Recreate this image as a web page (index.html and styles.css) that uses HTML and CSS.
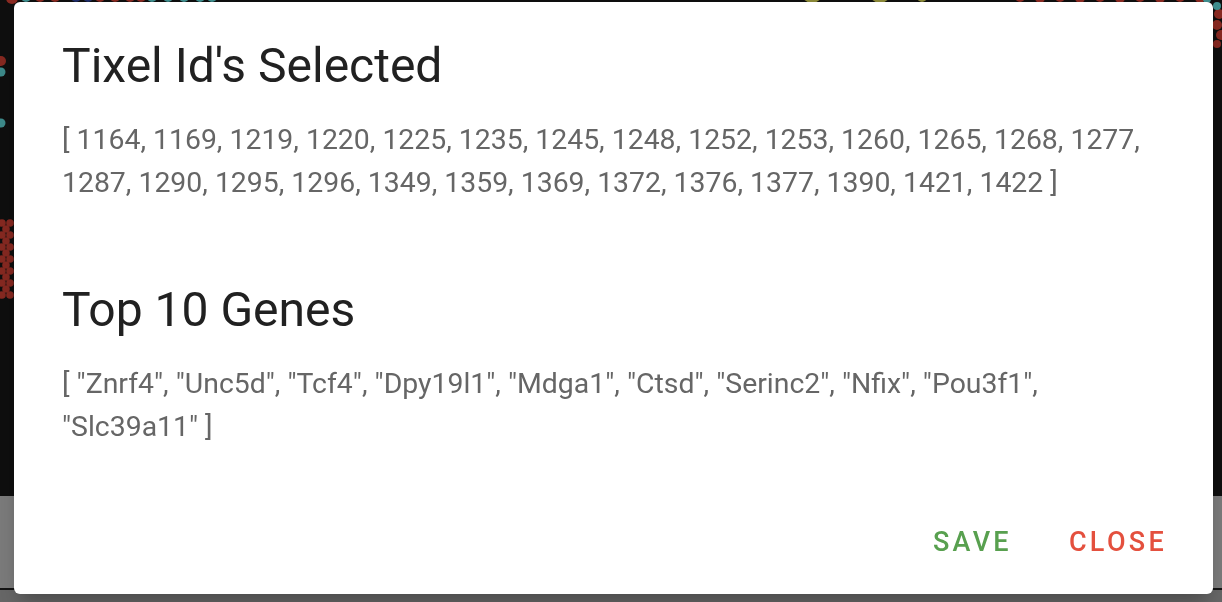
FILE: index.html
```html
<!DOCTYPE html>
<html lang="en">
<head>
<meta charset="utf-8">
<title>Tixel Id's Selected</title>
<link rel="stylesheet" href="styles.css">
</head>
<body>
<div class="page">
  <div class="plot-area">
    <svg class="dots" width="1222" height="496" viewBox="0 0 1222 496" xmlns="http://www.w3.org/2000/svg">
      <g fill="#8a2a22">
        <circle cx="12" cy="-2" r="6"/><circle cx="40" cy="-3" r="5"/><circle cx="55" cy="-3" r="5"/>
        <circle cx="100" cy="-3" r="5"/><circle cx="115" cy="-3" r="5"/><circle cx="130" cy="-3" r="5"/><circle cx="141" cy="-3" r="5"/>
        <circle cx="1020" cy="-3" r="5"/><circle cx="1040" cy="-2" r="5"/><circle cx="1060" cy="-3" r="5"/><circle cx="1080" cy="-2" r="5"/>
        <circle cx="1100" cy="-3" r="5"/><circle cx="1120" cy="-2" r="5"/><circle cx="1140" cy="-3" r="5"/><circle cx="1160" cy="-2" r="5"/>
        <circle cx="1180" cy="-3" r="5"/><circle cx="1200" cy="-2" r="5"/>
        <circle cx="1219" cy="14" r="5"/><circle cx="1217" cy="25" r="5"/><circle cx="1221" cy="35" r="5"/><circle cx="1217" cy="44" r="4"/>
        <circle cx="1" cy="61" r="5"/>
        <circle cx="2" cy="223" r="3.8"/><circle cx="2" cy="235" r="3.8"/><circle cx="2" cy="247" r="3.8"/><circle cx="2" cy="259" r="3.8"/><circle cx="2" cy="271" r="3.8"/><circle cx="2" cy="283" r="3.8"/><circle cx="2" cy="295" r="3.8"/>
        <circle cx="10" cy="223" r="3.8"/><circle cx="10" cy="235" r="3.8"/><circle cx="10" cy="247" r="3.8"/><circle cx="10" cy="259" r="3.8"/><circle cx="10" cy="271" r="3.8"/><circle cx="10" cy="283" r="3.8"/><circle cx="10" cy="295" r="3.8"/>
        <circle cx="6" cy="229" r="3.8"/><circle cx="6" cy="241" r="3.8"/><circle cx="6" cy="253" r="3.8"/><circle cx="6" cy="265" r="3.8"/><circle cx="6" cy="277" r="3.8"/><circle cx="6" cy="289" r="3.8"/>
      </g>
      <g fill="#3f8f8f">
        <circle cx="26" cy="-3" r="5"/><circle cx="152" cy="-3" r="5"/><circle cx="168" cy="-3" r="5"/><circle cx="184" cy="-3" r="5"/><circle cx="200" cy="-3" r="5"/><circle cx="212" cy="-3" r="5"/>
        <circle cx="1207" cy="-1" r="4"/><circle cx="1217" cy="6" r="4"/>
        <circle cx="1" cy="72" r="4.5"/><circle cx="1" cy="123" r="4.5"/>
      </g>
      <g fill="#1f2e6b">
        <circle cx="76" cy="-3" r="5"/><circle cx="88" cy="-3" r="5"/>
      </g>
      <g fill="#8c8a38">
        <circle cx="812" cy="-8" r="11"/><circle cx="880" cy="-8" r="11"/><circle cx="922" cy="-3" r="5"/>
      </g>
    </svg>
  </div>
  <div class="grey-band"></div>
  <div class="rule"></div>
  <div class="footer-band"></div>
</div>

<div class="dialog" role="dialog" aria-labelledby="dlg-title">
  <div class="dialog-content">
    <section class="section">
      <h3 class="title" id="dlg-title">Tixel Id's Selected</h3>
      <p class="text">[ 1164, 1169, 1219, 1220, 1225, 1235, 1245, 1248, 1252, 1253, 1260, 1265, 1268, 1277, 1287, 1290, 1295, 1296, 1349, 1359, 1369, 1372, 1376, 1377, 1390, 1421, 1422 ]</p>
    </section>
    <section class="section">
      <h3 class="title">Top 10 Genes</h3>
      <p class="text">[ "Znrf4", "Unc5d", "Tcf4", "Dpy19l1", "Mdga1", "Ctsd", "Serinc2", "Nfix", "Pou3f1", "Slc39a11" ]</p>
    </section>
  </div>
  <div class="dialog-actions">
    <button class="btn btn-save" type="button">Save</button>
    <button class="btn btn-close" type="button">Close</button>
  </div>
</div>
</body>
</html>
```

FILE: styles.css
```css
html, body {
  margin: 0;
  padding: 0;
  height: 100%;
  overflow: hidden;
}

body {
  font-family: Roboto, "Liberation Sans", Arial, sans-serif;
  background: #0f0f0f;
}

.page {
  display: flex;
  flex-direction: column;
  height: 602px;
}

.plot-area {
  position: relative;
  height: 496px;
  background: #0f0f0f;
  overflow: hidden;
}

.dots {
  position: absolute;
  left: 0;
  top: 0;
  display: block;
}

.grey-band {
  height: 92px;
  background: #7f7f7f;
}

.rule {
  height: 2px;
  background: #141414;
}

.footer-band {
  flex: 1;
  background: #6a6a6a;
}

.dialog {
  position: fixed;
  left: 14px;
  top: 2px;
  width: 1199px;
  height: 592px;
  box-sizing: border-box;
  background: #ffffff;
  border-radius: 6px;
  display: flex;
  flex-direction: column;
  box-shadow: 0 11px 15px -7px rgba(0,0,0,0.2), 0 24px 38px 3px rgba(0,0,0,0.14);
}

.dialog-content {
  padding: 36px 48px 0 48px;
}

.section + .section {
  margin-top: 78px;
}

.title {
  margin: 0;
  font-size: 48px;
  line-height: 56px;
  font-weight: 400;
  color: #212121;
}

.text {
  margin: 24px 0 0 0;
  font-size: 28.4px;
  line-height: 43px;
  color: #666666;
}

.dialog-actions {
  margin-top: auto;
  display: flex;
  justify-content: flex-end;
  gap: 33px;
  padding: 0 34px 19px 0;
}

.btn {
  font-family: Roboto, "Liberation Sans", Arial, sans-serif;
  font-size: 27px;
  font-weight: 500;
  line-height: 49px;
  letter-spacing: 3.3px;
  text-transform: uppercase;
  background: none;
  border: none;
  padding: 8px 12px;
  margin: 0;
  cursor: pointer;
}

.btn-save {
  color: #58a04f;
}

.btn-close {
  color: #e4503e;
}
```
